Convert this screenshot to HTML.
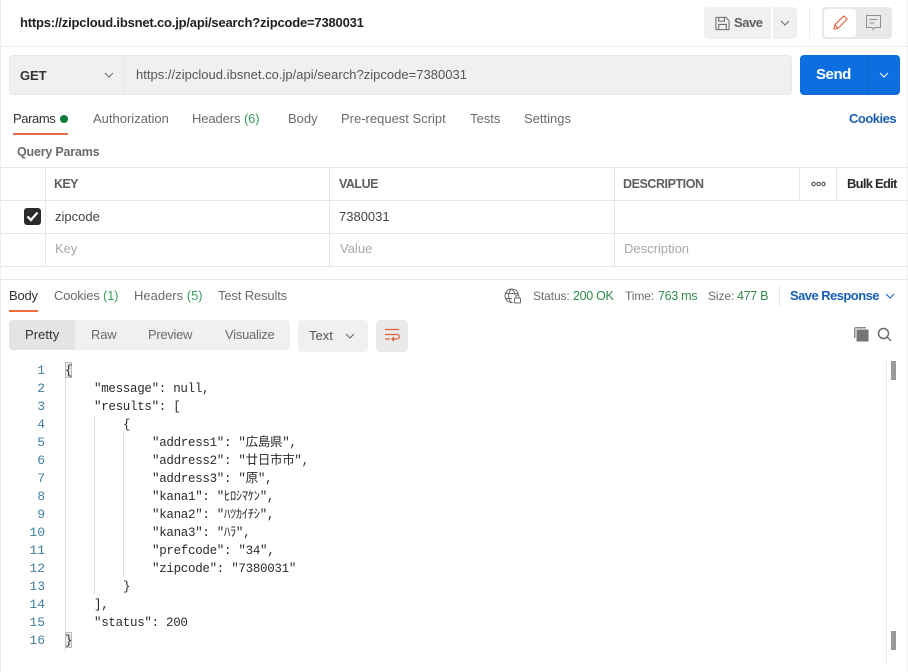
<!DOCTYPE html>
<html><head><meta charset="utf-8"><style>
html,body{margin:0;padding:0;background:#fff}
#p{position:relative;width:908px;height:672px;overflow:hidden;background:#fff;font-family:"Liberation Sans","Noto Sans CJK JP",sans-serif;color:#6b6b6b;font-size:13px}
#p div,#p svg{position:absolute}
.t{white-space:nowrap;line-height:18px;letter-spacing:0}
.b{font-weight:700}
.g2{color:#3c9a5f}
.gs{color:#2f8a4c;font-size:12.5px;letter-spacing:-.3px}
.s{font-size:12px;letter-spacing:-.1px}
.l{background:#e6e6e6}
.c{font-family:"Liberation Mono","Noto Sans CJK JP",monospace;font-size:12.5px;letter-spacing:-.3px;line-height:18px;white-space:pre;color:#2b2b2b}
.n{font-family:"Liberation Mono",monospace;font-size:13px;line-height:18px;color:#3f7fa0;text-align:right;width:25px;left:20px}
</style></head><body><div id="p">
<div class="l" style="left:0;top:0;width:1px;height:672px;background:#eee"></div>
<div class="l" style="left:906px;top:0;width:2px;height:672px;background:#f5f5f5"></div>
<div class="t b" style="left:20px;top:14px;color:#212121;letter-spacing:-.19px">https://zipcloud.ibsnet.co.jp/api/search?zipcode=7380031</div>
<div style="left:704px;top:7px;width:67px;height:32px;background:#f0f0f0;border-radius:4px 0 0 4px"></div>
<div style="left:773px;top:7px;width:24px;height:32px;background:#f0f0f0;border-radius:0 4px 4px 0"></div>
<svg style="left:715px;top:16px" width="15" height="15" viewBox="0 0 16 16" fill="none" stroke="#6b6b6b" stroke-width="1.100"><path d="M1 1.500h10.500l3.500 3.500v9.500H1z"/><path d="M4 1.500v4h6v-4M4 14.500V9h8v5.500"/></svg>
<div class="t b" style="left:734px;top:14px;letter-spacing:-.45px;color:#5f5f5f">Save</div>
<svg style="left:780px;top:19px" width="10" height="8" viewBox="0 0 10 8" fill="none" stroke="#6b6b6b" stroke-width="1"><path d="M1 2l4 4 4-4"/></svg>
<div class="l" style="left:809px;top:7px;width:1px;height:32px;background:#ededed"></div>
<div style="left:822px;top:7px;width:70px;height:32px;background:#e9e9e9;border-radius:4px"></div>
<div style="left:824px;top:9px;width:32px;height:28px;background:#fff;border-radius:3px"></div>
<svg style="left:833px;top:15px" width="15" height="15" viewBox="0 0 16 16" fill="none" stroke="#e0633c" stroke-width="1.200"><path d="M1 15l1-4.500L11.500 1l3.500 3.500L5.500 14z"/><path d="M2 10.500L5.500 14"/></svg>
<svg style="left:866px;top:15px" width="15" height="16" viewBox="0 0 15 16" fill="none" stroke="#8f8f8f" stroke-width="1"><path d="M.5.500h14v12H9l-1.500 2-1.500-2H.5z"/><path d="M3.500 4.500h8M3.500 8h5"/></svg>
<div class="l" style="left:0;top:46px;width:908px;height:1px;background:#ececec"></div>

<div style="left:9px;top:55px;width:781px;height:38px;background:#f0f0f0;border:1px solid #e8e8e8;border-radius:4px"></div>
<div class="l" style="left:124px;top:56px;width:1px;height:38px;background:#e6e6e6"></div>
<div class="t b" style="left:20px;top:67px;color:#333;letter-spacing:-.1px;font-size:13px">GET</div>
<svg style="left:104px;top:71px" width="10" height="8" viewBox="0 0 10 8" fill="none" stroke="#6b6b6b" stroke-width="1"><path d="M1 2l4 4 4-4"/></svg>
<div class="t" style="left:136px;top:66px;color:#555;letter-spacing:.02px">https://zipcloud.ibsnet.co.jp/api/search?zipcode=7380031</div>
<div style="left:800px;top:55px;width:100px;height:40px;background:#0d6ee0;border-radius:4px"></div>
<div style="left:867px;top:55px;width:1px;height:40px;background:#0b62c8"></div>
<div class="t b" style="left:816px;top:66px;color:#fff;font-size:15px;letter-spacing:-.45px">Send</div>
<svg style="left:879px;top:71px" width="10" height="8" viewBox="0 0 10 8" fill="none" stroke="#fff" stroke-width="1"><path d="M1 2l4 4 4-4"/></svg>

<div class="t" style="left:13px;top:110px;color:#333;letter-spacing:-.4px">Params</div>
<div style="left:60px;top:115px;width:8px;height:8px;border-radius:50%;background:#0b7a3b"></div>
<div style="left:13px;top:133px;width:55px;height:2px;background:#e0704a"></div>
<div class="t" style="left:93px;top:110px">Authorization</div>
<div class="t" style="left:192px;top:110px;letter-spacing:-.1px">Headers <span class="g2">(6)</span></div>
<div class="t" style="left:288px;top:110px">Body</div>
<div class="t" style="left:341px;top:110px">Pre-request Script</div>
<div class="t" style="left:470px;top:110px">Tests</div>
<div class="t" style="left:524px;top:110px">Settings</div>
<div class="t b" style="left:849px;top:110px;color:#1a5fb4;letter-spacing:-.5px">Cookies</div>
<div class="t b" style="left:17px;top:143px;color:#6b6b6b;font-size:12.500px;letter-spacing:-.2px">Query Params</div>

<div class="l" style="left:0;top:167px;width:908px;height:1px"></div>
<div class="l" style="left:0;top:200px;width:908px;height:1px"></div>
<div class="l" style="left:0;top:233px;width:908px;height:1px"></div>
<div class="l" style="left:0;top:266px;width:908px;height:1px"></div>
<div class="l" style="left:45px;top:167px;width:1px;height:99px"></div>
<div class="l" style="left:329px;top:167px;width:1px;height:99px"></div>
<div class="l" style="left:614px;top:167px;width:1px;height:99px"></div>
<div class="l" style="left:799px;top:167px;width:1px;height:33px"></div>
<div class="l" style="left:836px;top:167px;width:1px;height:33px"></div>
<div class="t b" style="left:54px;top:175px;font-size:12.500px;color:#5f5f5f;letter-spacing:-.6px">KEY</div>
<div class="t b" style="left:339px;top:175px;font-size:12.500px;color:#5f5f5f;letter-spacing:-.5px">VALUE</div>
<div class="t b" style="left:623px;top:175px;font-size:12.500px;color:#5f5f5f;letter-spacing:-.44px">DESCRIPTION</div>
<svg style="left:811px;top:181px" width="15" height="6" viewBox="0 0 15 6" fill="none" stroke="#555" stroke-width="1.100"><circle cx="2.500" cy="3" r="1.700"/><circle cx="7.500" cy="3" r="1.700"/><circle cx="12.500" cy="3" r="1.700"/></svg>
<div class="t b" style="left:847px;top:175px;color:#2b2b2b;letter-spacing:-.75px">Bulk Edit</div>
<div style="left:24px;top:208px;width:17px;height:17px;background:#2b2b2b;border-radius:3px"></div>
<svg style="left:26px;top:211px" width="13" height="11" viewBox="0 0 13 11" fill="none" stroke="#fff" stroke-width="2.200"><path d="M1.500 5.500l3.500 3.500 6.500-7.500"/></svg>
<div class="t" style="left:55px;top:208px;color:#444">zipcode</div>
<div class="t" style="left:339px;top:208px;color:#444">7380031</div>
<div class="t" style="left:55px;top:240px;color:#a8a8a8">Key</div>
<div class="t" style="left:340px;top:240px;color:#a8a8a8">Value</div>
<div class="t" style="left:624px;top:240px;color:#a8a8a8">Description</div>

<div class="l" style="left:0;top:279px;width:908px;height:1px"></div>
<div class="t" style="left:9px;top:287px;color:#333;letter-spacing:-.2px">Body</div>
<div style="left:9px;top:310px;width:29px;height:2px;background:#f26b3a"></div>
<div class="t" style="left:54px;top:287px;letter-spacing:-.2px">Cookies <span class="g2">(1)</span></div>
<div class="t" style="left:134px;top:287px">Headers <span class="g2">(5)</span></div>
<div class="t" style="left:218px;top:287px;letter-spacing:-.15px">Test Results</div>
<svg style="left:504px;top:288px" width="17" height="16" viewBox="0 0 17 16" fill="none" stroke="#6b6b6b" stroke-width="1"><path d="M9 14.500A6.800 6.800 0 1 1 14.500 6.500"/><path d="M1 5.500h13M1 10.500h7M7.500 1C3.500 5 3.500 10.500 7.500 14.500M7.500 1c2.500 2 3.500 4 3.700 6"/><rect x="10.500" y="10" width="6" height="5" rx=".5"/><path d="M12 10V8.500a1.500 1.500 0 0 1 3 0V10"/></svg>
<div class="t s" style="left:533px;top:287px">Status:</div>
<div class="t gs" style="left:573px;top:287px">200 OK</div>
<div class="t s" style="left:625px;top:287px">Time:</div>
<div class="t gs" style="left:658px;top:287px">763 ms</div>
<div class="t s" style="left:708px;top:287px">Size:</div>
<div class="t gs" style="left:737px;top:287px">477 B</div>
<div class="l" style="left:779px;top:286px;width:1px;height:20px"></div>
<div class="t b" style="left:790px;top:287px;color:#1a5fb4;letter-spacing:-.55px">Save Response</div>
<svg style="left:885px;top:292px" width="10" height="8" viewBox="0 0 10 8" fill="none" stroke="#1a5fb4" stroke-width="1"><path d="M1 2l4 4 4-4"/></svg>

<div style="left:9px;top:320px;width:281px;height:30px;background:#f0f0f0;border-radius:4px"></div>
<div style="left:9px;top:320px;width:66px;height:30px;background:#e4e4e4;border-radius:4px 0 0 4px"></div>
<div class="t" style="left:25px;top:326px;color:#333;letter-spacing:.05px">Pretty</div>
<div class="t" style="left:91px;top:326px;letter-spacing:-.2px">Raw</div>
<div class="t" style="left:148px;top:326px;letter-spacing:-.3px">Preview</div>
<div class="t" style="left:225px;top:326px;letter-spacing:-.25px">Visualize</div>
<div style="left:298px;top:320px;width:70px;height:32px;background:#f0f0f0;border-radius:4px"></div>
<div class="t" style="left:309px;top:327px;color:#555">Text</div>
<svg style="left:345px;top:332px" width="10" height="8" viewBox="0 0 10 8" fill="none" stroke="#6b6b6b" stroke-width="1"><path d="M1 2l4 4 4-4"/></svg>
<div style="left:376px;top:320px;width:32px;height:32px;background:#eaeaea;border-radius:4px"></div>
<svg style="left:384px;top:328px" width="16" height="14" viewBox="0 0 16 14" fill="none" stroke="#d9623c" stroke-width="1.300"><path d="M1 1.500h14M1 6.500h12a2 2 0 0 1 0 4.500H8M1 11h5M10 9l-2 2 2 2"/></svg>
<svg style="left:853px;top:326px" width="16" height="16" viewBox="0 0 16 16"><path d="M3 1h10v1.500H2.500V12H1V3a2 2 0 0 1 2-2z" fill="#8a8a8a"/><rect x="3.500" y="3.500" width="12" height="12" fill="#757575"/></svg>
<svg style="left:877px;top:327px" width="15" height="15" viewBox="0 0 15 15" fill="none" stroke="#6b6b6b" stroke-width="1.500"><circle cx="6.500" cy="6.500" r="5"/><path d="M10 10l4 4"/></svg>

<div class="l" style="left:65px;top:361px;width:1px;height:290px;background:#dcdcdc"></div>
<div class="l" style="left:94px;top:415px;width:1px;height:180px;background:#dcdcdc"></div>
<div class="l" style="left:123px;top:433px;width:1px;height:144px;background:#dcdcdc"></div>
<div style="left:65px;top:362px;width:7px;height:16px;background:#e8e8e8;border:1px solid #bbb;box-sizing:border-box"></div>
<div style="left:65px;top:632px;width:7px;height:16px;background:#e8e8e8;border:1px solid #bbb;box-sizing:border-box"></div>
<div class="n" style="top:362px">1</div>
<div class="n" style="top:380px">2</div>
<div class="n" style="top:398px">3</div>
<div class="n" style="top:416px">4</div>
<div class="n" style="top:434px">5</div>
<div class="n" style="top:452px">6</div>
<div class="n" style="top:470px">7</div>
<div class="n" style="top:488px">8</div>
<div class="n" style="top:506px">9</div>
<div class="n" style="top:524px">10</div>
<div class="n" style="top:542px">11</div>
<div class="n" style="top:560px">12</div>
<div class="n" style="top:578px">13</div>
<div class="n" style="top:596px">14</div>
<div class="n" style="top:614px">15</div>
<div class="n" style="top:632px">16</div>
<div class="c" style="left:65px;top:362px">{</div>
<div class="c" style="left:94px;top:380px">"message": null,</div>
<div class="c" style="left:94px;top:398px">"results": [</div>
<div class="c" style="left:123px;top:416px">{</div>
<div class="c" style="left:152px;top:434px">"address1": "広島県",</div>
<div class="c" style="left:152px;top:452px">"address2": "廿日市市",</div>
<div class="c" style="left:152px;top:470px">"address3": "原",</div>
<div class="c" style="left:152px;top:488px">"kana1": "ﾋﾛｼﾏｹﾝ",</div>
<div class="c" style="left:152px;top:506px">"kana2": "ﾊﾂｶｲﾁｼ",</div>
<div class="c" style="left:152px;top:524px">"kana3": "ﾊﾗ",</div>
<div class="c" style="left:152px;top:542px">"prefcode": "34",</div>
<div class="c" style="left:152px;top:560px">"zipcode": "7380031"</div>
<div class="c" style="left:123px;top:578px">}</div>
<div class="c" style="left:94px;top:596px">],</div>
<div class="c" style="left:94px;top:614px">"status": 200</div>
<div class="c" style="left:65px;top:632px">}</div>
<div class="l" style="left:886px;top:360px;width:1px;height:304px;background:#e8e8e8"></div>
<div style="left:891px;top:361px;width:5px;height:19px;background:#999"></div>
<div style="left:891px;top:631px;width:5px;height:19px;background:#999"></div>
</div></body></html>
